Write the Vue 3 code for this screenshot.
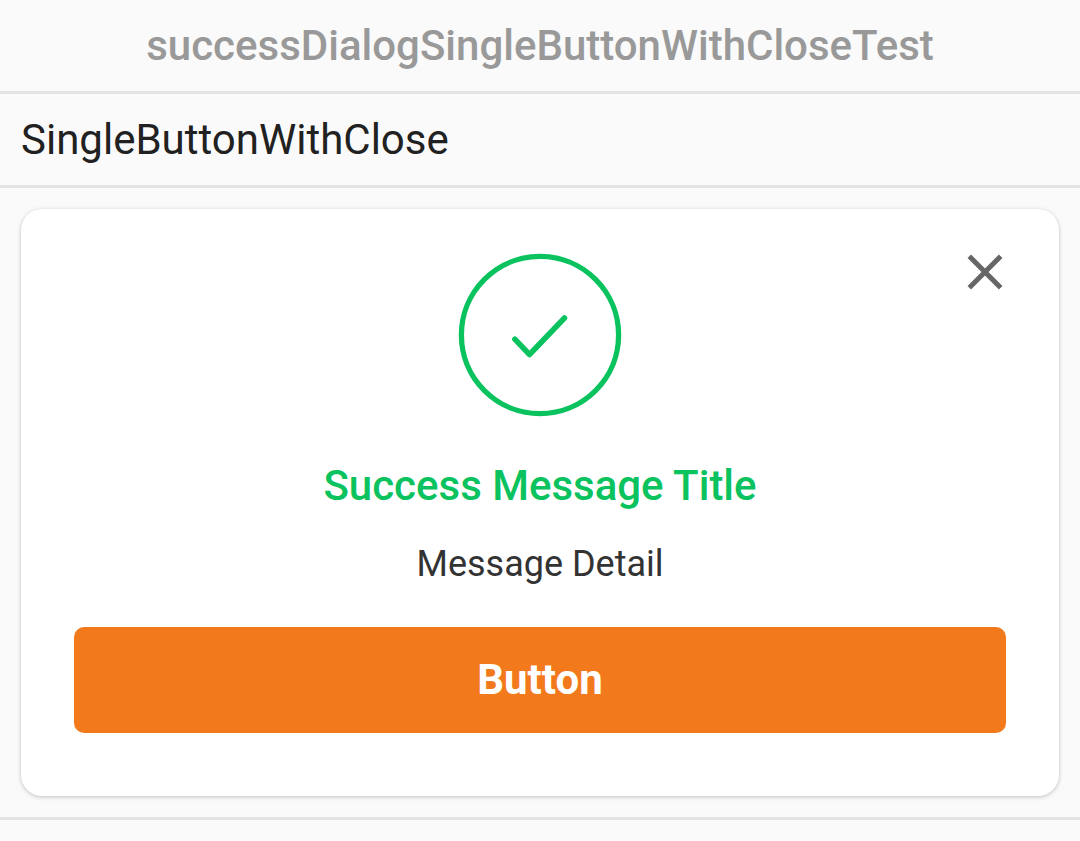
<script setup>
const rowLabel = 'SingleButtonWithClose'
</script>

<template>
  <main class="page">
    <h1 class="heading">successDialogSingleButtonWithCloseTest</h1>
    <p class="row-label">{{ rowLabel }}</p>
    <div class="stage">
      <section class="card" role="dialog" aria-labelledby="dialog-title">
        <button class="close" type="button" aria-label="Close">
          <svg viewBox="0 0 36 36" width="36" height="36" fill="none" stroke="#666" stroke-width="5">
            <path d="M2.300 2.300 33.700 33.700M33.700 2.300 2.300 33.700" />
          </svg>
        </button>
        <svg class="status" viewBox="0 0 164 164" width="164" height="164" fill="none" stroke="#0ac25e">
          <circle cx="82" cy="82" r="78.600" stroke-width="5.300" />
          <path d="M56.800 86.200 71.500 101.500 106.500 65" stroke-width="5.500" stroke-linecap="round" stroke-linejoin="round" />
        </svg>
        <h2 id="dialog-title" class="title">Success Message Title</h2>
        <p class="detail">Message Detail</p>
        <button class="action" type="button">Button</button>
      </section>
    </div>
  </main>
</template>

<style>
body {
  margin: 0;
  background: #fafafa;
}
</style>

<style scoped>
.page {
  font-family: Roboto, "Liberation Sans", sans-serif;
  background: #fafafa;
}
.heading,
.row-label {
  margin: 0;
  font-size: 42px;
  line-height: 49px;
  border-bottom: 3px solid #e4e4e4;
}
.heading {
  padding: 21px;
  font-weight: 500;
  text-align: center;
  color: #999;
}
.row-label {
  padding: 21px;
  font-weight: 400;
  color: #212121;
}
.stage {
  padding: 21px;
  border-bottom: 3px solid #e4e4e4;
}
.card {
  position: relative;
  display: flex;
  flex-direction: column;
  align-items: center;
  padding: 44px 53px 63px;
  border-radius: 21px;
  background: #fff;
  box-shadow: 0 1px 4px rgba(0, 0, 0, 0.23);
}
.close {
  position: absolute;
  top: 37px;
  right: 48px;
  display: flex;
  padding: 8px;
  border: 0;
  background: none;
}
.status {
  display: block;
}
.title {
  margin: 44px 0 0;
  font-size: 42px;
  line-height: 49px;
  font-weight: 500;
  color: #0ac25e;
}
.detail {
  margin: 32px 0 0;
  font-size: 36px;
  line-height: 45px;
  color: #333;
}
.action {
  width: 100%;
  margin-top: 40px;
  padding: 29px 16px;
  border: 0;
  border-radius: 10px;
  background: #f27a1c;
  color: #fff;
  font: 700 42px/48px Roboto, "Liberation Sans", sans-serif;
}
</style>
